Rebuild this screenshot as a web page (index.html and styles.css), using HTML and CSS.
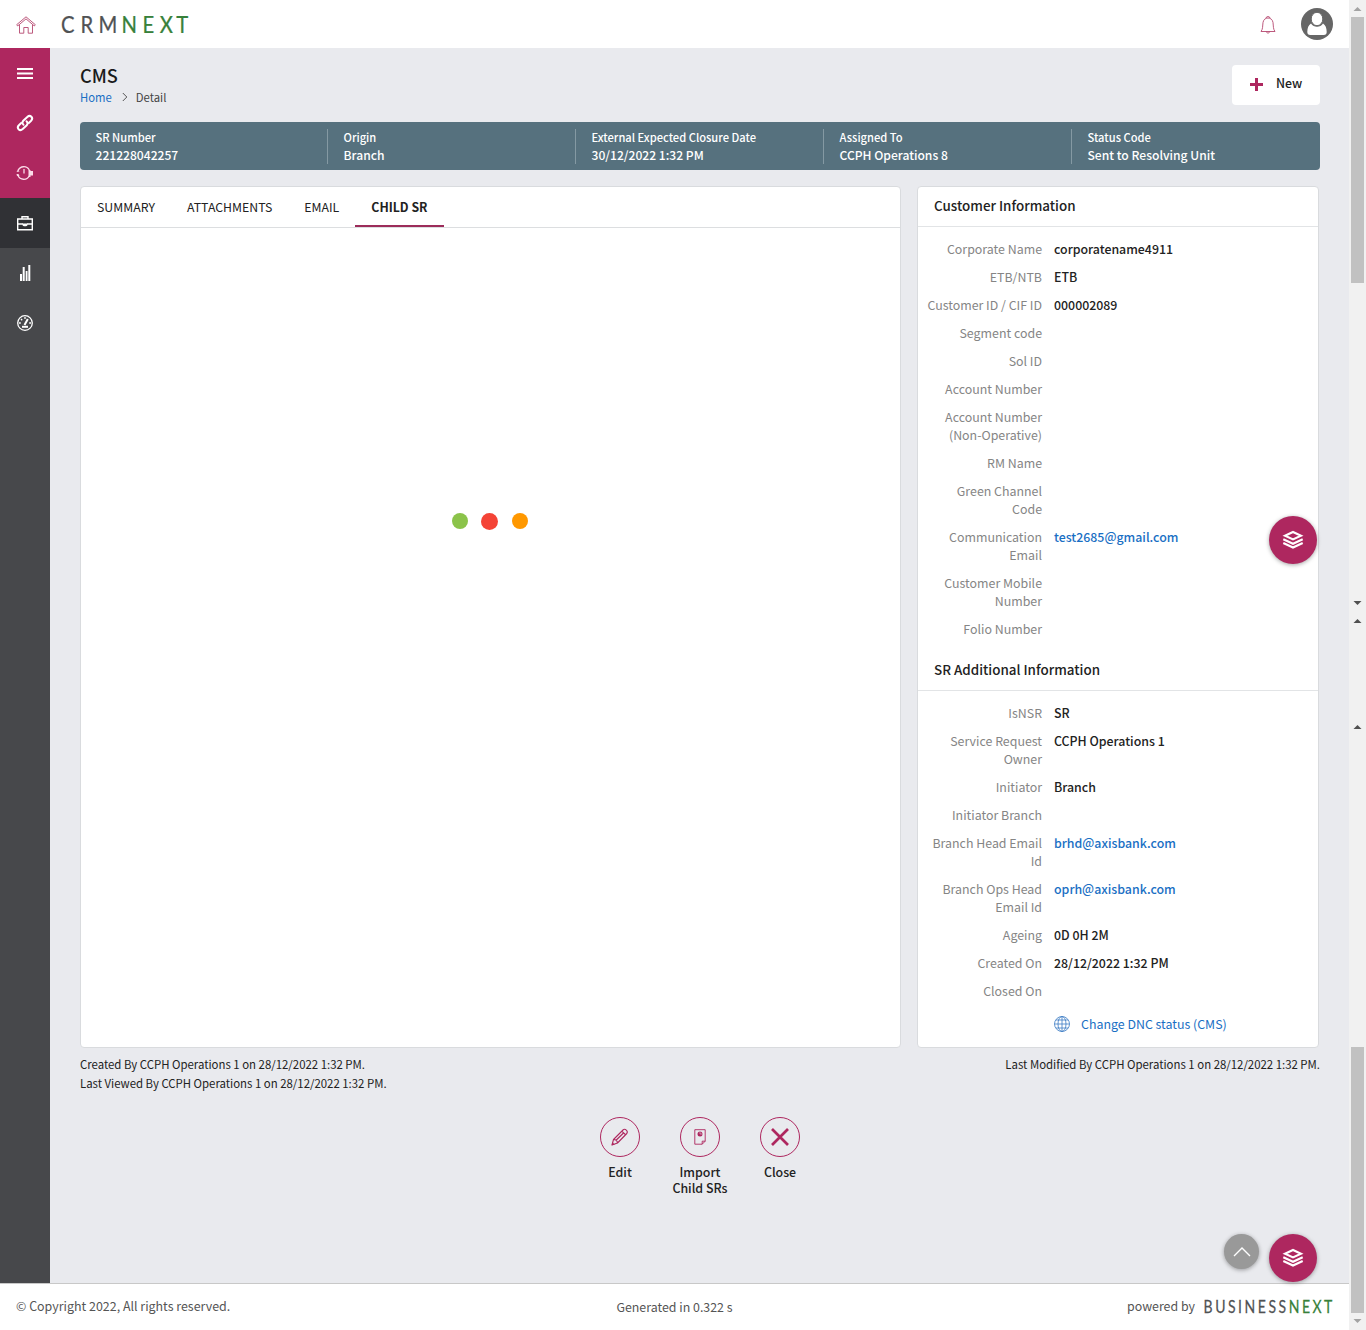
FILE: index.html
```html
<!DOCTYPE html>
<html lang="en">
<head>
<meta charset="utf-8">
<title>CMS - Detail</title>
<link rel="stylesheet" href="styles.css">
</head>
<body>
<div class="window">
<div class="app">
  <header class="topbar">
    <svg class="home-icon" width="20" height="18" viewBox="0 0 20 18"><path d="M.7 8.700 10 .8l9.300 7.900-1 1.200L10 2.900 1.700 9.900zM3.500 8.800V17.200H7.800V11.500H12.200V17.200H16.500V8.800"/></svg>
    <svg class="logo" width="130" height="36" viewBox="0 0 130 36"><text y="27" transform="scale(.9 1)"><tspan class="ink" x="-1 20.500 40.500">CRM</tspan><tspan class="green" x="66 89.500 108.500 127">NEXT</tspan></text></svg>
    <svg class="bell" width="16" height="18" viewBox="0 0 16 18"><path d="M6 2C6 .1 10 .1 10 2M1 15.500C3 13 2.500 10 3 6.500 3.500 3.500 5.500 2 8 2s4.500 1.500 5 4.500c.5 3.500 0 6.500 2 9zM6.300 15.500c.2 2 3.200 2 3.400 0"/></svg>
    <svg class="avatar" width="32" height="32" viewBox="0 0 32 32"><circle cx="16" cy="16" r="16" fill="#666"/><path fill="#fff" d="M10 15.500C7.500 17 6.300 20 6.300 24c0 2 1 3 3 3h13.400c2 0 3-1 3-3 0-4-1.200-7-3.700-8.500-1.500 2.200-3.500 3.300-6 3.300s-4.500-1.100-6-3.300z"/><ellipse cx="16" cy="11" rx="5.800" ry="6.700" fill="#fff" stroke="#666"/></svg>
  </header>
  <div class="body">
    <nav class="side">
      <a class="item brand"><svg width="16" height="16" viewBox="0 0 16 16"><path fill="#fff" d="M0 3h16v2H0zM0 7.500h16v2H0zM0 12h16v2H0z"/></svg></a>
      <a class="item brand"><svg width="18" height="18" viewBox="0 0 18 18"><g fill="none" stroke="#fff" stroke-width="2" stroke-linecap="round"><path d="M7.500 10.800C6 9.500 6.200 7.800 7.500 6.500L11.300 2.900c1.400-1.200 3-1.200 4.100-.1 1.100 1.200.9 2.800-.3 4l-2.300 2.200"/><path d="M10.500 7.200C12 8.500 11.800 10.200 10.500 11.500L6.700 15.100c-1.400 1.200-3 1.200-4.100.1-1.100-1.200-.9-2.800.3-4l2.300-2.200"/></g></svg></a>
      <a class="item brand"><svg width="18" height="16" viewBox="0 0 18 16"><g fill="none" stroke="#fbdbe8" stroke-width="1.300"><path d="M2 5.500A6.300 6.300 0 0 1 13.300 5M13.300 11A6.300 6.300 0 0 1 2 10.500M8 4v4.500"/></g><path fill="#fbdbe8" d="m.5 7 3-.5-1.500-2zM.5 9h2l1 2H1zM12.500 5h2v1H17v4.500h-2.500V12h-2z"/></svg></a>
      <a class="item current"><svg width="16" height="16" viewBox="0 0 16 16"><g fill="none" stroke="#fff" stroke-width="1.400"><path d="M.7 4h14.600v10.800H.7zM5 4V1.800h6V4M.7 9H6M10 9h5.300"/></g><path fill="#fff" d="M5.500 8.500h5v1.200c0 2-5 2-5 0z"/></svg></a>
      <a class="item"><svg width="14" height="18" viewBox="0 0 14 18"><path fill="#fff" d="M2 10h2v7H2zM4.700 3h2v14h-2zM7.700 7h1.800v10H7.700zM10.300 1h2v16h-2z"/></svg></a>
      <a class="item"><svg width="18" height="18" viewBox="0 0 18 18"><g fill="none" stroke="#fff" stroke-width="1.300"><circle cx="9" cy="9" r="7.300"/><path stroke-width="2" d="M6 12.800h6"/><path d="M3 9h1.800M13.200 9H15M5 5l1.200 1.200M9 3v2"/><path stroke-width="2" d="m8.500 11 3.300-6"/></g></svg></a>
    </nav>
    <main class="main">
      <div class="page-head">
        <div>
          <h1>CMS</h1>
          <div class="crumbs"><a>Home</a><svg width="6" height="10" viewBox="0 0 6 10"><path d="m.8 1 4 4-4 4" fill="none" stroke="#555"/></svg><span>Detail</span></div>
        </div>
        <button class="new"><svg width="13" height="13" viewBox="0 0 13 13"><path fill="#ae275f" d="M5 0h3v5h5v3H8v5H5V8H0V5h5z"/></svg><span>New</span></button>
      </div>
      <section class="strip">
        <div class="cell"><b>SR Number</b><span>221228042257</span></div>
        <div class="cell"><b>Origin</b><span>Branch</span></div>
        <div class="cell"><b>External Expected Closure Date</b><span>30/12/2022 1:32 PM</span></div>
        <div class="cell"><b>Assigned To</b><span>CCPH Operations 8</span></div>
        <div class="cell"><b>Status Code</b><span>Sent to Resolving Unit</span></div>
      </section>
      <div class="columns">
        <section class="card work">
          <div class="tabs"><a>SUMMARY</a><a>ATTACHMENTS</a><a>EMAIL</a><a class="on">CHILD SR</a></div>
          <div class="loader"><i class="dot lime"></i><i class="dot red"></i><i class="dot orange"></i></div>
        </section>
        <aside class="card info">
          <h2>Customer Information</h2>
          <dl>
            <dt>Corporate Name</dt><dd>corporatename4911</dd>
            <dt>ETB/NTB</dt><dd>ETB</dd>
            <dt>Customer ID / CIF ID</dt><dd>000002089</dd>
            <dt>Segment code</dt><dd></dd>
            <dt>Sol ID</dt><dd></dd>
            <dt>Account Number</dt><dd></dd>
            <dt>Account Number<br>(Non-Operative)</dt><dd></dd>
            <dt>RM Name</dt><dd></dd>
            <dt>Green Channel<br>Code</dt><dd></dd>
            <dt>Communication<br>Email</dt><dd><a>test2685@gmail.com</a></dd>
            <dt>Customer Mobile<br>Number</dt><dd></dd>
            <dt>Folio Number</dt><dd></dd>
          </dl>
          <h2>SR Additional Information</h2>
          <dl>
            <dt>IsNSR</dt><dd>SR</dd>
            <dt>Service Request<br>Owner</dt><dd>CCPH Operations 1</dd>
            <dt>Initiator</dt><dd>Branch</dd>
            <dt>Initiator Branch</dt><dd></dd>
            <dt>Branch Head Email<br>Id</dt><dd><a>brhd@axisbank.com</a></dd>
            <dt>Branch Ops Head<br>Email Id</dt><dd><a>oprh@axisbank.com</a></dd>
            <dt>Ageing</dt><dd>0D 0H 2M</dd>
            <dt>Created On</dt><dd>28/12/2022 1:32 PM</dd>
            <dt>Closed On</dt><dd></dd>
          </dl>
          <a class="dnc"><svg width="16" height="16" viewBox="0 0 16 16"><g fill="none" stroke="#3c7cc4" stroke-width=".8"><circle cx="8" cy="8" r="7.500"/><ellipse cx="8" cy="8" rx="4" ry="7.500"/><path d="M8 .5v15M.5 8h15M2 4h12M2 12h12"/></g></svg><span>Change DNC status (CMS)</span></a>
        </aside>
      </div>
      <div class="notes">
        <div>Created By CCPH Operations 1 on 28/12/2022 1:32 PM.<br>Last Viewed By CCPH Operations 1 on 28/12/2022 1:32 PM.</div>
        <div>Last Modified By CCPH Operations 1 on 28/12/2022 1:32 PM.</div>
      </div>
      <div class="actions">
        <a class="action"><i><svg width="20" height="20" viewBox="0 0 20 20"><g fill="none" stroke="#ae275f" stroke-width="1.100" stroke-linejoin="round"><path d="m2 18 1.500-5.500L13 3c2-2 5.500 1 3.800 3.500L7.500 16zM3.500 12.500c2 0 3.800 1.500 4 3.500M11.800 4.200l4 3.800M5.800 13.500l7.700-7.500"/></g><path fill="#ae275f" d="m1.700 18.300.8-3 2.200 2.200z"/></svg></i><span>Edit</span></a>
        <a class="action"><i><svg width="12" height="16" viewBox="0 0 12 16"><path fill="none" stroke="#ae275f" stroke-width=".9" d="M.8.700h10.400v11.500l-3 3H.8zM11.200 12.200h-3v3"/><circle cx="6" cy="5" r="2.500" fill="#ae275f"/><path fill="none" stroke="#e9eaee" stroke-width=".5" d="M6 5V2.500M6 5h2.500"/></svg></i><span>Import<br>Child SRs</span></a>
        <a class="action"><i><svg width="18" height="18" viewBox="0 0 18 18"><path stroke="#ae275f" stroke-width="2.700" d="m1 1 16 16M17 1 1 17"/></svg></i><span>Close</span></a>
      </div>
    </main>
  </div>
  <footer class="foot">
    <span class="copy">© Copyright 2022, All rights reserved.</span>
    <span class="gen">Generated in 0.322 s</span>
    <span class="powered"><span>powered by</span><svg width="129" height="26" viewBox="0 0 129 26"><text transform="scale(.8 1)" x="-.5" y="19" textLength="161"><tspan class="ink">BUSINESS</tspan><tspan class="green">NEXT</tspan></text></svg></span>
  </footer>
</div>
<div class="scroll">
  <svg width="17" height="1330" viewBox="0 0 17 1330"><path fill="#f1f1f1" d="M0 0h17v1330H0z"/><path fill="#c1c1c1" d="M2 17h13v266H2zM2 1047h13v266H2z"/><path fill="#a3a3a3" d="m4.500 11 4-4 4 4zM4.500 1319l4 4 4-4z"/><path fill="#505050" d="m4.500 601 4 4 4-4zM4.500 623l4-4 4 4zM4.500 729l4-4 4 4z"/></svg>
</div>
<a class="fab mid"><svg width="22" height="20" viewBox="0 0 22 20"><g fill="none" stroke="#fff" stroke-width="2.100"><path d="m3 5.700 8-3.700 8 3.700-8 3.700zM1.300 9.300l9.700 4.500 9.700-4.500M1.300 13l9.700 4.500 9.700-4.500"/></g></svg></a>
<a class="fab low"><svg width="22" height="20" viewBox="0 0 22 20"><g fill="none" stroke="#fff" stroke-width="2.100"><path d="m3 5.700 8-3.700 8 3.700-8 3.700zM1.300 9.300l9.700 4.500 9.700-4.500M1.300 13l9.700 4.500 9.700-4.500"/></g></svg></a>
<a class="to-top"><svg width="18" height="10" viewBox="0 0 18 10"><path d="m1 9 8-8 8 8" fill="none" stroke="#fff" stroke-width="1.400"/></svg></a>
</div>
</body>
</html>
```

FILE: styles.css
```css
* { box-sizing: border-box; }
body { margin: 0; font: 400 12.4px/18px "Noto Sans CJK SC", sans-serif; color: #222; }
h1, h2, dl, dd, dt { margin: 0; }
svg { display: block; flex: none; overflow: visible; }
a { color: #1a6fc4; }
.window { position: relative; display: flex; width: 1366px; height: 1330px; overflow: hidden; }
.app { width: 1349px; display: flex; flex-direction: column; }
.scroll { width: 17px; }

.topbar { height: 48px; display: flex; align-items: center; padding: 0 16px; background: #fff; }
.home-icon path, .bell path { fill: none; stroke: #b5476f; stroke-width: .9; }
.home-icon, .bell { margin-top: 1px; }
.logo { margin-left: 26px; }
.logo text { font: 400 22.500px Lato, sans-serif; }
.ink { fill: #505254; stroke: #505254; stroke-width: .25px; }
.green { fill: #37813a; stroke: #37813a; stroke-width: .25px; }
.bell { margin-left: auto; }
.avatar { margin-left: 25px; }

.body { flex: 1; display: flex; min-height: 0; }
.side { width: 50px; background: #47484b; }
.item { height: 50px; display: flex; align-items: center; justify-content: center; }
.brand { background: #ae275f; }
.current { background: #303135; }
.main { flex: 1; padding: 16px 29px 0 30px; background: #e9eaee; }

.page-head { display: flex; justify-content: space-between; height: 58px; }
h1 { font-size: 18.200px; line-height: 22px; font-weight: 500; color: #1a1a1a; }
.crumbs { display: flex; align-items: center; font-size: 11.300px; margin-top: 2px; color: #444; }
.crumbs svg { margin: 0 8px 0 10px; }
.new { width: 88px; height: 40px; margin-top: 1px; border: 0; border-radius: 4px; background: #fff; display: flex; align-items: center; gap: 13px; padding: 0 0 4px 18px; font: 500 12.36px/18px "Noto Sans CJK SC", sans-serif; color: #222; }
.new svg { margin-top: 3px; }

.strip { display: grid; grid-template-columns: repeat(5, 1fr); height: 48px; padding: 7px 0 6px; border-radius: 4px; background: #56717e; color: #fff; font-weight: 500; }
.cell { padding-left: 15.500px; border-right: 1px solid #8499a3; }
.cell b, .cell span { display: block; margin-top: -1px; line-height: 18px; }
.cell span { margin-top: 0; font-size: 12.100px; }
.cell:last-child { border-right: 0; }
.cell b { font-weight: 500; font-size: 11.150px; }

.columns { display: flex; gap: 16px; margin-top: 16px; height: 862px; }
.card { background: #fff; border: 1px solid #d9dbde; border-radius: 4px; }
.work { width: 821px; }
.info { width: 402px; }
.tabs { display: flex; height: 41px; border-bottom: 1px solid #dcdee0; }
.tabs a { padding: 11px 16px 0; color: #222; font-size: 12.300px; line-height: 18px; height: 40px; }
.tabs .on { font-weight: 700; border-bottom: 2px solid #9c2c5a; }
.loader { display: flex; justify-content: center; align-items: center; gap: 13.500px; padding: 284px 1.500px 0 0; height: 302px; }
.dot { width: 16px; height: 16px; border-radius: 50%; }
.lime { background: #8bc34a; }
.red { background: #f44336; width: 17px; height: 17px; }
.orange { background: #ff9800; }

h2 { height: 40px; padding: 8px 16px 0; border-bottom: 1px solid #e2e4e6; font-size: 13.400px; line-height: 20px; font-weight: 500; color: #222; }
dl { display: grid; grid-template-columns: 124px 1fr; column-gap: 12px; row-gap: 10px; padding: 13px 0; }
dt { text-align: right; color: #858585; }
dd { font-weight: 500; font-size: 12.360px; color: #222; }
.dnc { display: flex; align-items: center; gap: 11px; padding-left: 136px; margin-top: 2px; }

.notes { display: flex; justify-content: space-between; margin-top: 7px; font-size: 11.400px; line-height: 19px; }
.actions { display: flex; justify-content: center; margin-top: 24px; }
.action { width: 80px; display: flex; flex-direction: column; align-items: center; gap: 7px; text-align: center; color: #222; font-weight: 500; line-height: 16px; }
.action i { width: 40px; height: 40px; border: 1px solid #ae275f; border-radius: 50%; display: flex; align-items: center; justify-content: center; }

.foot { height: 47px; border-top: 1px solid #c8c8c8; display: grid; grid-template-columns: 1fr auto 1fr; align-items: center; padding: 0 16px; background: #fff; color: #555; }
.copy, .powered > span { margin-top: -2px; }
.copy { font-size: 12.450px; }
.powered { display: flex; justify-content: flex-end; align-items: center; gap: 9px; }
.powered text { font: 400 17.500px Lato, sans-serif; }

.fab, .to-top { position: absolute; display: flex; align-items: center; justify-content: center; border-radius: 50%; box-shadow: 0 1px 4px rgba(0,0,0,.35); }
.fab { left: 1269px; width: 48px; height: 48px; background: #ae275f; }
.mid { top: 516px; }
.low { top: 1234px; }
.to-top { left: 1224px; top: 1234px; width: 35px; height: 35px; background: #999; }
```
